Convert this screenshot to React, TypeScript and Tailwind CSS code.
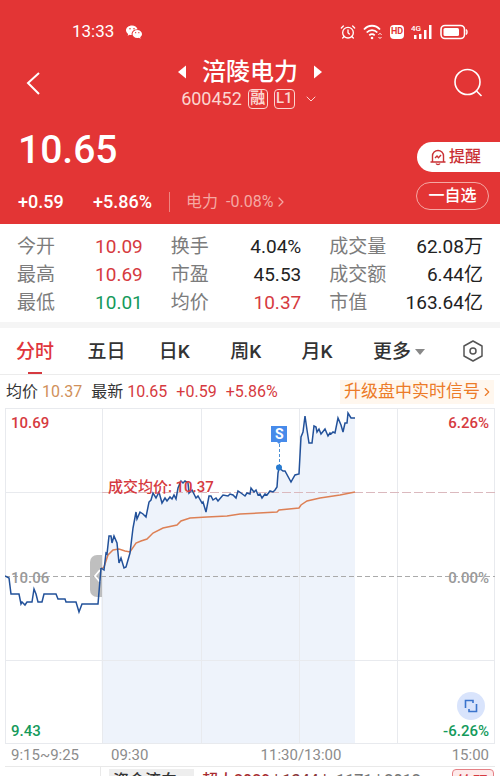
import React, { useState } from "react";
import clsx from "clsx";
import { AlarmClock, ChevronDown, ChevronRight } from "lucide-react";

interface Stat {
  label: string;
  value: string;
  tone?: "up" | "down";
}

const STAT_COLUMNS: { className: string; stats: Stat[] }[] = [
  {
    className: "w-[27%]",
    stats: [
      { label: "今开", value: "10.09", tone: "up" },
      { label: "最高", value: "10.69", tone: "up" },
      { label: "最低", value: "10.01", tone: "down" },
    ],
  },
  {
    className: "w-[28%]",
    stats: [
      { label: "换手", value: "4.04%" },
      { label: "市盈", value: "45.53" },
      { label: "均价", value: "10.37", tone: "up" },
    ],
  },
  {
    className: "w-[33%]",
    stats: [
      { label: "成交量", value: "62.08万" },
      { label: "成交额", value: "6.44亿" },
      { label: "市值", value: "163.64亿" },
    ],
  },
];

const TABS = ["分时", "五日", "日K", "周K", "月K"];

const AUCTION_LINE =
  "5,576 9,578 11,594 19,594 21,604 22,602 25,605 27,602 32,602 34,589 36,594 38,602 42,602 44,594 56,594 58,599 65,599 66,602 76,602 79,612 82,604 98,604 101,568";

const PRICE_LINE =
  "101,568 104,570 106,553 107,554 109,536 111,536 112,543 114,536 117,543 119,563 121,558 124,568 126,567 130,553 133,528 136,512 137,519 140,512 143,514 146,517 149,502 151,500 153,493 156,498 159,492 162,503 165,498 167,501 170,497 172,499 174,495 176,499 178,488 181,481 183,483 185,481 188,483 189,493 192,490 196,498 198,496 202,503 203,502 206,512 209,496 211,496 213,500 216,498 218,501 223,495 228,496 230,494 233,495 236,498 238,491 241,493 245,496 247,493 250,494 251,488 254,492 256,490 258,495 260,494 262,498 265,494 267,495 270,491 273,492 275,490 277,487 278,473 279,468 283,471 285,471 291,482 295,475 299,474 301,437 303,432 305,416 307,430 309,443 312,443 314,426 316,427 317,432 319,429 321,434 325,429 328,436 330,433 331,434 333,432 335,433 338,418 341,425 343,432 345,423 347,423 348,413 351,418 355,418";

const AVERAGE_LINE =
  "101,569 104,567 108,555 113,550 119,549 125,551 130,552 136,543 141,541 147,539 153,533 163,528 177,525 181,521 190,518 207,517 227,516 240,514 277,512 279,510 299,508 301,505 307,501 320,498 340,495 355,492";

const StatusBar: React.FC = () => (
  <div className="flex h-16 items-center justify-between pl-[72px] pr-8">
    <div className="flex items-center gap-3 text-[17px]">
      <span>13:33</span>
      <svg viewBox="0 0 32 28" className="h-3.5 w-4" fill="currentColor">
        <path
          fillRule="evenodd"
          d="M12 1C5.400 1 0 5.300 0 10.600c0 3 1.700 5.600 4.400 7.400L3.300 21.500l4-2c1.400.4 2.800.6 4.200.6C10 13.800 14.500 8.500 23.200 8.300 21.800 4 17.300 1 12 1ZM8 6a1.600 1.600 0 1 1 0 3.200A1.600 1.600 0 0 1 8 6Zm8 0a1.600 1.600 0 1 1 0 3.200A1.600 1.600 0 0 1 16 6Z"
        />
        <path
          fillRule="evenodd"
          d="M22.500 10c-5.300 0-9.500 3.600-9.500 8s4.200 8 9.500 8c1.200 0 2.300-.2 3.300-.5l3.400 1.800-.9-3C30.600 22.800 32 20.500 32 18c0-4.400-4.200-8-9.500-8Zm-3.200 4a1.300 1.300 0 1 1 0 2.600 1.300 1.300 0 0 1 0-2.600Zm6.400 0a1.300 1.300 0 1 1 0 2.600 1.300 1.300 0 0 1 0-2.600Z"
        />
      </svg>
    </div>
    <div className="flex items-center gap-[7px]">
      <AlarmClock className="h-4 w-4" strokeWidth={2} />
      <svg viewBox="0 0 20 16" className="h-4 w-5" fill="none" stroke="currentColor">
        <path d="M1 5.500C5.500.5 12.500.5 17 5.500M3.700 8.500c3-3.200 7.600-3.200 10.600 0M6.300 11.400c1.600-1.600 3.800-1.600 5.400 0" strokeWidth="1.800" />
        <circle cx="9" cy="14" r="1.300" fill="currentColor" stroke="none" />
        <path d="M15.500 10.800 17 9.300l1.500 1.500M15.500 13l1.500 1.500 1.500-1.500" strokeWidth="1" />
      </svg>
      <span className="flex h-3.5 w-3.5 items-center justify-center rounded-sm bg-white text-[9px] font-bold text-[#e33535]">
        HD
      </span>
      <svg viewBox="0 0 22 16" className="h-4 w-[22px]" fill="currentColor">
        <text x="0" y="7" fontSize="8" fontWeight="500">4G</text>
        <path d="M3 11h2.500v4H3zM8 10h2.500v5H8zM13 6h2.500v9H13zM18 1h2.500v14H18z" />
      </svg>
      <svg viewBox="0 0 28 16" className="h-4 w-7" fill="none" stroke="currentColor">
        <rect x="1" y="1.500" width="23.500" height="13" rx="4" strokeWidth="1.600" />
        <rect x="3.500" y="4" width="15.500" height="8" rx="1.500" fill="currentColor" stroke="none" />
        <path d="M26 5.500c1.300 1 1.300 4 0 5" strokeWidth="1.500" />
      </svg>
    </div>
  </div>
);

const TitleBar: React.FC = () => (
  <div className="grid grid-cols-[80px_1fr_80px] items-center">
    <button aria-label="返回" className="pl-5">
      <svg viewBox="0 0 28 28" className="h-7 w-7" fill="none" stroke="currentColor" strokeWidth="2">
        <path d="M19 4 8 14l11 11" />
      </svg>
    </button>
    <div className="flex flex-col items-center">
      <div className="flex h-8 items-center gap-4">
        <button aria-label="上一只">
          <svg viewBox="0 0 8 14" className="h-3.5 w-2" fill="currentColor">
            <path d="M8 .500v13L0 7z" />
          </svg>
        </button>
        <h1 className="text-[24px] font-medium">涪陵电力</h1>
        <button aria-label="下一只">
          <svg viewBox="0 0 8 14" className="h-3.5 w-2" fill="currentColor">
            <path d="M0 .500v13L8 7z" />
          </svg>
        </button>
      </div>
      <div className="flex h-[22px] items-center gap-1.5 text-lg text-[#fbd5d0]">
        <span>600452</span>
        <span className="flex h-5 w-5 items-center justify-center rounded-sm border border-[#fbd5d0] text-[15px] font-bold">
          融
        </span>
        <span className="flex h-5 w-[21px] items-center justify-center rounded-sm border border-[#fbd5d0] text-[15px] font-medium">
          L1
        </span>
        <ChevronDown className="ml-0.5 h-4 w-4" strokeWidth={1.5} />
      </div>
    </div>
    <button aria-label="搜索" className="flex justify-end pr-4">
      <svg viewBox="0 0 32 32" className="h-8 w-8" fill="none" stroke="currentColor" strokeWidth="1.600">
        <circle cx="15.500" cy="15" r="12.500" />
        <path d="m24.500 24 5 5" />
      </svg>
    </button>
  </div>
);

const PriceSummary: React.FC = () => (
  <div className="flex justify-between pt-3">
    <div className="pl-[18px]">
      <div className="text-[39px] leading-[56px] font-medium">10.65</div>
      <div className="mt-1 flex h-10 items-center text-lg">
        <span className="w-[75px] font-medium">+0.59</span>
        <span className="w-[76px] font-medium">+5.86%</span>
        <button className="flex items-center border-l border-[#ee8580] pl-4 text-base leading-5 text-[#f5a8a3]">
          <span className="mr-2">电力</span>
          <span>-0.08%</span>
          <ChevronRight className="h-4 w-4" strokeWidth={1.8} />
        </button>
      </div>
    </div>
    <div className="flex flex-col items-end gap-2.5 pt-5 text-base font-medium">
      <button className="flex h-[30px] w-[83px] items-center gap-0.5 rounded-l-full bg-white pl-3 text-[#c93135]">
        <svg viewBox="0 0 18 18" className="h-[18px] w-[18px]" fill="none" stroke="currentColor" strokeWidth="1.400">
          <path d="M3.500 14V8a5.500 5.500 0 0 1 11 0v6M1.500 14h15M7 15.500c.8 1.400 3.200 1.400 4 0" />
          <path d="m6 10 2-2 1.500 1.700L12 7" />
        </svg>
        提醒
      </button>
      <button className="mr-[11px] flex h-7 w-[73px] items-center justify-center rounded-full border border-[#f5a8a3]">
        一自选
      </button>
    </div>
  </div>
);

const StatsPanel: React.FC = () => (
  <section className="flex justify-between border-b-6 border-[#f5f5f5] px-[17px] pt-[9px] pb-[5px]">
    {STAT_COLUMNS.map((column) => (
      <dl key={column.stats[0].label} className={column.className}>
        {column.stats.map(({ label, value, tone }) => (
          <div key={label} className="flex h-7 items-center justify-between">
            <dt className="text-[19px] text-[#7c7c7c]">{label}</dt>
            <dd
              className={clsx(
                "text-[19px]",
                tone === "up" && "text-[#d63a40]",
                tone === "down" && "text-[#149a5b]",
                !tone && "text-[#222]"
              )}
            >
              {value}
            </dd>
          </div>
        ))}
      </dl>
    ))}
  </section>
);

const Chart: React.FC = () => (
  <div className="relative mx-[5px] h-[336px] text-[15px]">
    <svg viewBox="5 408 490 336" preserveAspectRatio="none" className="h-full w-full" fill="none">
      <polygon points={`${PRICE_LINE} 355,744 102,744`} fill="#eef3fb" />
      <path
        d="M5 408.500H495M5 492.500H102M5 660.500H495M5 743.500H495M5.500 408V744M102.500 408V744M201.500 408V744M299.500 408V744M397.500 408V744M494.500 408V744"
        stroke="#e8eaee"
      />
      <path d="M5 576.500H495" stroke="#aaa" strokeDasharray="5 3" />
      <path d="M102 492.500H495" stroke="#dbb9be" strokeDasharray="9 3" />
      <path d="M102 555H97a7 7 0 0 0-7 7v28a7 7 0 0 0 7 7h5z" fill="#aaaaaa" fillOpacity=".75" />
      <path d="m100 570-5 6 5 6" stroke="#fff" strokeWidth="1.800" />
      <polyline points={AVERAGE_LINE} stroke="#dd8055" strokeWidth="1.500" />
      <polyline points={AUCTION_LINE} stroke="#22519a" strokeWidth="1.500" />
      <polyline points={PRICE_LINE} stroke="#22519a" strokeWidth="1.500" />
      <path d="M279.500 444V466" stroke="#4b8fd4" strokeDasharray="3 2" />
      <circle cx="279" cy="467.500" r="3" fill="#287bd0" />
      <path d="M276 441h6l-3 3z" fill="#478bea" />
    </svg>
    <span className="absolute top-[18px] left-[56%] flex h-4 w-4 -translate-x-1/2 items-center justify-center bg-[#478bea] text-sm font-bold text-white">
      S
    </span>
    <span className="absolute top-1 left-1.5 font-medium text-[#d63a40]">10.69</span>
    <span className="absolute top-1 right-1.5 font-medium text-[#d63a40]">6.26%</span>
    <span className="absolute top-[68px] left-[21%] font-medium text-[#d63a40]">成交均价: 10.37</span>
    <span className="absolute top-[159px] left-1.5 font-medium text-[#999]">10.06</span>
    <span className="absolute top-[159px] right-1.5 font-medium text-[#999]">0.00%</span>
    <span className="absolute bottom-0.5 left-1.5 font-medium text-[#149a5b]">9.43</span>
    <span className="absolute right-1.5 bottom-0.5 font-medium text-[#149a5b]">-6.26%</span>
    <button
      aria-label="全屏"
      className="absolute right-2.5 bottom-6 flex h-7 w-7 items-center justify-center rounded-full bg-[#d9e4fc] text-[#3b74cc]"
    >
      <svg viewBox="0 0 14 14" className="h-3.5 w-3.5" fill="none" stroke="currentColor" strokeWidth="1.600">
        <path d="M1.500 9V1.500H9V4M12.500 5v7.500H5V10" />
      </svg>
    </button>
  </div>
);

const App: React.FC = () => {
  const [activeTab, setActiveTab] = useState("分时");

  return (
    <div className="h-screen overflow-hidden bg-white font-[Roboto,'Noto_Sans_CJK_SC',sans-serif] text-[#333]">
      <header className="h-56 bg-[#e33535] text-white">
        <StatusBar />
        <div className="-mt-2">
          <TitleBar />
        </div>
        <PriceSummary />
      </header>

      <StatsPanel />

      <nav className="flex h-[47px] items-center border-b border-[#ececec] px-4 text-[19px]">
        <div className="grid h-full flex-1 grid-cols-5">
          {TABS.map((tab) => (
            <button
              key={tab}
              onClick={() => setActiveTab(tab)}
              className={clsx(
                "relative justify-self-start pt-0.5",
                activeTab === tab ? "font-medium text-[#e0353c]" : "font-medium"
              )}
            >
              {tab}
              {activeTab === tab && (
                <span className="absolute bottom-0 left-1/2 h-0.5 w-3.5 -translate-x-1/2 bg-[#d63a40]" />
              )}
            </button>
          ))}
        </div>
        <button className="flex w-[89px] items-center gap-1 pt-0.5 font-medium">
          更多
          <svg viewBox="0 0 10 6" className="h-1.5 w-2.5" fill="#888">
            <path d="M0 0h10L5 6z" />
          </svg>
        </button>
        <button aria-label="设置">
          <svg viewBox="0 0 22 22" className="h-[22px] w-[22px]" fill="none" stroke="#555" strokeWidth="1.500">
            <path d="m11 1 9 5v10l-9 5-9-5V6z" strokeLinejoin="round" />
            <circle cx="11" cy="11" r="3" />
          </svg>
        </button>
      </nav>

      <div className="flex h-[33px] items-center justify-between px-1.5 text-base">
        <div className="flex gap-[9px] whitespace-nowrap">
          <span>
            均价 <span className="text-[#d0905a]">10.37</span>
          </span>
          <span>
            最新 <span className="text-[#d63a40]">10.65</span>
          </span>
          <span className="text-[#d63a40]">+0.59</span>
          <span className="text-[#d63a40]">+5.86%</span>
        </div>
        <a href="#signal" className="flex h-6 items-center bg-[#fff7ee] pl-1 text-[17px] whitespace-nowrap text-[#ec7b28]">
          升级盘中实时信号
          <ChevronRight className="h-4 w-3.5" strokeWidth={2} />
        </a>
      </div>

      <Chart />

      <div className="mx-[5px] flex h-[23px] items-center border-b border-[#e9e9e9] text-[15px] text-[#8c8c8c]">
        <span className="w-[20%] pl-1.5">9:15~9:25</span>
        <span className="flex-1 pl-2">09:30</span>
        <span className="w-[39%]">11:30/13:00</span>
        <span className="pr-1.5">15:00</span>
      </div>

      <div className="ml-[20%] flex h-8 items-start gap-2 border-l border-[#e9e9e9] pt-0.5 pr-1.5 pl-2 text-base font-medium whitespace-nowrap">
        <button className="w-[85px] bg-[#eeeeee] pl-1 text-left leading-6">资金流向</button>
        <span className="flex-1 leading-6 text-[#a82c30]">
          超大2029 <span className="text-[#8c3a3a]">| 1344 |</span>{" "}
          <span className="text-[#777]">-1171 | 2012</span>
        </span>
        <button className="h-7 w-[42px] rounded-sm border border-[#e58085] bg-[#fdeaea] leading-6 text-[#d63a40]">
          筹码
        </button>
      </div>
    </div>
  );
};

export default App;
